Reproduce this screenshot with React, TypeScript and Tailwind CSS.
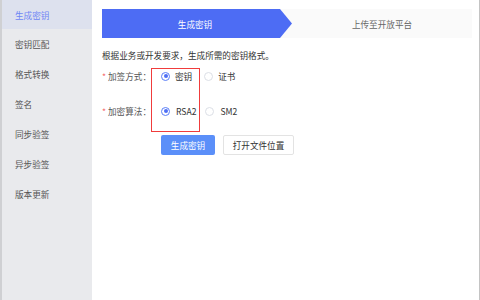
import { useState } from 'react';

const font = { fontFamily: '"Noto Sans CJK SC", "Noto Sans", sans-serif' };

const menu = ['生成密钥', '密钥匹配', '格式转换', '签名', '同步验签', '异步验签', '版本更新'];

function Radio({ checked, label, gap }: { checked: boolean; label: string; gap: string }) {
    return (
        <div className={`flex items-center ${gap}`}>
            <span
                className={`w-[9px] h-[9px] rounded-full border flex items-center justify-center ${checked ? 'border-[#5b7ff7]' : 'border-[#dcdfe6]'}`}
            >
                {checked && <span className="w-[4px] h-[4px] rounded-full bg-[#4f6ff5]" />}
            </span>
            <span className="text-[#333]">{label}</span>
        </div>
    );
}

export default function App() {
    const [active] = useState(0);

    return (
        <div className="relative w-[480px] h-[300px] flex bg-white text-[8.6px] leading-[12px]" style={font}>
            {/* Sidebar */}
            <div className="w-[92px] h-full bg-[#e9eaed] border-l-2 border-[#cfd0d3] flex flex-col">
                {menu.map((m, i) => (
                    <div
                        key={m}
                        className={`${i === 0 ? 'h-[29px]' : 'h-[30px]'} flex items-center pl-[13px] ${i === active ? 'bg-[#dde1ee] text-[#6f86f5]' : 'text-[#555]'}`}
                    >
                        {m}
                    </div>
                ))}
            </div>

            {/* Main */}
            <div className="flex-1 h-full border-r border-[#c4c4c4] pl-[10px] pr-[7px] pt-[9px]">
                {/* Steps */}
                <div className="flex h-[29px] bg-[#fafafa]">
                    <div className="relative w-[178px] bg-[#4d6cf4] text-white flex items-center justify-center pl-[8px]">
                        生成密钥
                        <svg className="absolute right-[-12px] top-0" width="12" height="29" viewBox="0 0 12 29">
                            <polygon points="0,0 12,14.5 0,29" fill="#4d6cf4" />
                        </svg>
                    </div>
                    <div className="flex-1 flex items-center justify-center pl-[12px] text-[#666]">上传至开放平台</div>
                </div>

                <div className="mt-[11px] text-[#333]">根据业务或开发要求，生成所需的密钥格式。</div>

                <div className="mt-[9px] flex items-center">
                    <div className="w-[59px] flex items-center text-[#555]">
                        <span className="text-[#f56c6c] w-[6px]">*</span>
                        加签方式：
                    </div>
                    <Radio checked label="密钥" gap="gap-[5px]" />
                    <div className="w-[12px]" />
                    <Radio checked={false} label="证书" gap="gap-[5px]" />
                </div>

                <div className="mt-[23px] flex items-center">
                    <div className="w-[59px] flex items-center text-[#555]">
                        <span className="text-[#f56c6c] w-[6px]">*</span>
                        加密算法：
                    </div>
                    <Radio checked label="RSA2" gap="gap-[6px]" />
                    <div className="w-[9px]" />
                    <Radio checked={false} label="SM2" gap="gap-[6px]" />
                </div>

                <div className="mt-[18px] flex gap-[8px] pl-[59px]">
                    <button className="w-[54px] h-[20px] rounded-[2px] bg-[#5b8ff9] text-white flex items-center justify-center">
                        生成密钥
                    </button>
                    <button className="w-[71px] h-[20px] rounded-[2px] bg-white border border-[#e3e3e3] text-[#333] flex items-center justify-center">
                        打开文件位置
                    </button>
                </div>
            </div>

            {/* Annotation box */}
            <div className="absolute left-[151px] top-[68px] w-[49px] h-[64px] outline outline-1 outline-[#f03c3c] -outline-offset-1" />
        </div>
    );
}
